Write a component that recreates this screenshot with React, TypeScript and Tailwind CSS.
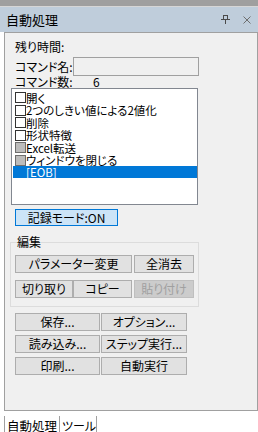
import React from 'react';

const items = [
  { t: '開く', gray: false, h: 'h-[13px]' },
  { t: '2つのしきい値による2値化', gray: false, h: 'h-[12px]' },
  { t: '削除', gray: false, h: 'h-[13px]' },
  { t: '形状特徴', gray: false, h: 'h-[12px]' },
  { t: 'Excel転送', gray: true, h: 'h-[13px]' },
  { t: 'ウィンドウを閉じる', gray: true, h: 'h-[12px]' },
];

function Btn({ w, children, disabled }: { w: string; children: React.ReactNode; disabled?: boolean }) {
  return (
    <div
      className={
        'h-[18px] flex items-center justify-center border leading-[12px] whitespace-nowrap ' +
        w +
        (disabled
          ? ' bg-[#cccccc] border-[#bfbfbf] text-[#a0a0a0]'
          : ' bg-[#e1e1e1] border-[#adadad] text-black')
      }
    >
      {children}
    </div>
  );
}

export default function App() {
  return (
    <div className="w-[258px] h-[432px] bg-white overflow-hidden text-[12px] leading-[12px] text-black whitespace-nowrap [font-feature-settings:'palt'] font-['Noto_Sans_CJK_JP','Noto_Sans',sans-serif]">
      <div className="h-[6px] bg-[#9f9f9f]" />
      <div className="h-[1px] bg-[#d6d6d6]" />
      <div className="h-[25px] bg-[#bfcddb] flex items-center pl-[6px] pr-[7px]">
        <span className="text-[13px] leading-[14px] flex-1">自動処理</span>
        <svg width="10" height="9" viewBox="0 0 10 9" className="mr-[12px]">
          <rect x="2.5" y="0.5" width="4" height="4" fill="none" stroke="#4a4a4a" />
          <rect x="0" y="4" width="9" height="1" fill="#4a4a4a" />
          <rect x="4" y="5" width="1" height="4" fill="#4a4a4a" />
        </svg>
        <svg width="8" height="8" viewBox="0 0 8 8">
          <path d="M0.5 0.5 L7.5 7.5 M7.5 0.5 L0.5 7.5" stroke="#6e6e6e" strokeWidth="1" />
        </svg>
      </div>

      <div className="ml-[4px] w-[254px] h-[379px] border border-[#a0a0a0] bg-[#f0f0f0]">
        <div className="pl-[10px] pt-[7px] h-[21px] leading-[14px]">残り時間:</div>
        <div className="mt-[3px] h-[19px] flex items-center pl-[10px]">
          <span className="w-[58px]">コマンド名:</span>
          <div className="w-[126px] h-[19px] border border-[#a0a0a0] bg-[#f0f0f0]" />
        </div>
        <div className="h-[12px] flex items-center pl-[10px]">
          <span className="w-[78px]">コマンド数:</span>
          <span>6</span>
        </div>

        <div className="ml-[6px] w-[187px] h-[117px] border border-[#828790] bg-white pt-[2px]">
          {items.map((it) => (
            <div key={it.t} className={'ml-[1px] w-[184px] flex items-center pl-[2px] leading-[12px] ' + it.h}>
              <div
                className={
                  'w-[11px] h-[11px] border shrink-0 ' +
                  (it.gray ? 'bg-[#bcbcbc] border-[#6d6d6d]' : 'bg-white border-[#333333]')
                }
              />
              <span className="text-[11.5px] leading-[12px]">{it.t}</span>
            </div>
          ))}
          <div className="ml-[1px] w-[184px] h-[12px] flex items-center pl-[13px] bg-[#0078d7] text-white text-[11.5px] leading-[12px]">
            [EOB]
          </div>
        </div>

        <div className="mt-[4px] ml-[10px] w-[103px] h-[17px] border border-[#0078d7] bg-[#cce4f7] flex items-center justify-center">
          記録モード:ON
        </div>

        <fieldset className="mt-[9px] ml-[5px] w-[189px] border border-[#dcdcdc] px-[4px] pb-[8px]">
          <legend className="ml-[2px] px-0 leading-[14px]">編集</legend>
          <div className="mt-[6px] flex gap-[2px]">
            <Btn w="w-[117px]">パラメーター変更</Btn>
            <Btn w="w-[60px]">全消去</Btn>
          </div>
          <div className="mt-[7px] flex gap-[2px]">
            <div className="flex">
              <Btn w="w-[58px]">切り取り</Btn>
              <Btn w="w-[59px]">コピー</Btn>
            </div>
            <Btn w="w-[60px]" disabled>
              貼り付け
            </Btn>
          </div>
        </fieldset>

        <div className="mt-[6px] ml-[10px] flex flex-col gap-[4px]">
          <div className="flex gap-[1px]">
            <Btn w="w-[85px]">保存...</Btn>
            <Btn w="w-[86px]">オプション...</Btn>
          </div>
          <div className="flex gap-[1px]">
            <Btn w="w-[85px]">読み込み...</Btn>
            <Btn w="w-[86px]">ステップ実行...</Btn>
          </div>
          <div className="flex gap-[1px]">
            <Btn w="w-[85px]">印刷...</Btn>
            <Btn w="w-[86px]">自動実行</Btn>
          </div>
        </div>
      </div>

      <div className="ml-[4px] mt-[5px] flex">
        <div className="w-[56px] h-[16px] border-l border-r border-[#a0a0a0] pl-[2px] pt-[3px] text-[12.5px] leading-[13px]">
          自動処理
        </div>
        <div className="w-[37px] h-[16px] border-r border-[#a0a0a0] pl-[2px] pt-[3px] leading-[13px]">
          ツール
        </div>
      </div>
    </div>
  );
}
